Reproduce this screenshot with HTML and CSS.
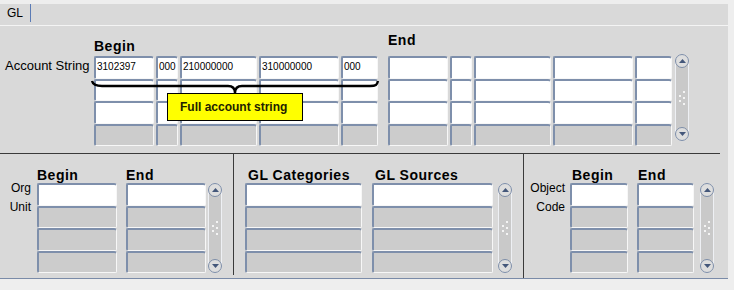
FILE: index.html
```html
<!DOCTYPE html>
<html lang="en">
  <head>
    <meta charset="UTF-8" />
    <title>GL Account Ranges</title>
    <link rel="stylesheet" href="styles.css">
  </head>
  <body>
    <div class="window">
      <div class="tabbar">
        <div class="tab">GL</div>
      </div>

      <!-- Account string ranges -->
      <div class="top">
        <div class="row-label">Account String</div>

        <div class="group">
          <div class="col-head head-begin">Begin</div>
          <div class="grid5">
            <div class="fld">3102397</div>
            <div class="fld">000</div>
            <div class="fld">210000000</div>
            <div class="fld">310000000</div>
            <div class="fld">000</div>
            <div class="fld"></div><div class="fld"></div><div class="fld"></div><div class="fld"></div><div class="fld"></div>
            <div class="fld"></div><div class="fld"></div><div class="fld"></div><div class="fld"></div><div class="fld"></div>
            <div class="fld off"></div><div class="fld off"></div><div class="fld off"></div><div class="fld off"></div><div class="fld off"></div>
          </div>
        </div>

        <div class="group group-end">
          <div class="col-head head-end">End</div>
          <div class="grid5">
            <div class="fld"></div><div class="fld"></div><div class="fld"></div><div class="fld"></div><div class="fld"></div>
            <div class="fld"></div><div class="fld"></div><div class="fld"></div><div class="fld"></div><div class="fld"></div>
            <div class="fld"></div><div class="fld"></div><div class="fld"></div><div class="fld"></div><div class="fld"></div>
            <div class="fld off"></div><div class="fld off"></div><div class="fld off"></div><div class="fld off"></div><div class="fld off"></div>
          </div>
        </div>

        <div class="sb sb-top">
          <span class="sb-btn"><svg width="7" height="4" viewBox="0 0 7 4"><path d="M0 4L3.5 0L7 4Z" fill="#44577a"/></svg></span>
          <svg class="grip" width="6" height="14" viewBox="0 0 6 14"><g fill="#f4f4f4"><rect x="4" y="0" width="2" height="2"/><rect x="0" y="4" width="2" height="2"/><rect x="4" y="6" width="2" height="2"/><rect x="0" y="9" width="2" height="2"/><rect x="4" y="12" width="2" height="2"/></g></svg>
          <span class="sb-btn"><svg width="7" height="4" viewBox="0 0 7 4"><path d="M0 0L3.5 4L7 0Z" fill="#44577a"/></svg></span>
        </div>

        <svg class="brace" width="292" height="18" viewBox="0 0 292 18">
          <path d="M2 3C3 7 6 8 12 8L138 8C143 8 145 11 145 15C145 11 147 8 152 8L280 8C286 8 287 7 288 3" fill="none" stroke="#000" stroke-width="2.4"/>
        </svg>
        <div class="callout">Full account string</div>
      </div>

      <div class="rule"></div>

      <div class="bottom">
        <!-- Org unit -->
        <div class="panel p-org">
          <div class="side-label side-org">Org<br>Unit</div>
          <div class="col col-a">
            <div class="col-head">Begin</div>
            <div class="stack">
              <div class="fld"></div><div class="fld off"></div><div class="fld off"></div><div class="fld off"></div>
            </div>
          </div>
          <div class="col col-b">
            <div class="col-head">End</div>
            <div class="stack">
              <div class="fld"></div><div class="fld off"></div><div class="fld off"></div><div class="fld off"></div>
            </div>
          </div>
          <div class="sb sb-bottom sb-org">
            <span class="sb-btn"><svg width="7" height="4" viewBox="0 0 7 4"><path d="M0 4L3.5 0L7 4Z" fill="#44577a"/></svg></span>
            <svg class="grip" width="6" height="14" viewBox="0 0 6 14"><g fill="#f4f4f4"><rect x="4" y="0" width="2" height="2"/><rect x="0" y="4" width="2" height="2"/><rect x="4" y="6" width="2" height="2"/><rect x="0" y="9" width="2" height="2"/><rect x="4" y="12" width="2" height="2"/></g></svg>
            <span class="sb-btn"><svg width="7" height="4" viewBox="0 0 7 4"><path d="M0 0L3.5 4L7 0Z" fill="#44577a"/></svg></span>
          </div>
        </div>

        <!-- Categories and sources -->
        <div class="panel p-gl">
          <div class="col col-c">
            <div class="col-head">GL Categories</div>
            <div class="stack">
              <div class="fld"></div><div class="fld off"></div><div class="fld off"></div><div class="fld off"></div>
            </div>
          </div>
          <div class="col col-d">
            <div class="col-head">GL Sources</div>
            <div class="stack">
              <div class="fld"></div><div class="fld off"></div><div class="fld off"></div><div class="fld off"></div>
            </div>
          </div>
          <div class="sb sb-bottom sb-gl">
            <span class="sb-btn"><svg width="7" height="4" viewBox="0 0 7 4"><path d="M0 4L3.5 0L7 4Z" fill="#44577a"/></svg></span>
            <svg class="grip" width="6" height="14" viewBox="0 0 6 14"><g fill="#f4f4f4"><rect x="4" y="0" width="2" height="2"/><rect x="0" y="4" width="2" height="2"/><rect x="4" y="6" width="2" height="2"/><rect x="0" y="9" width="2" height="2"/><rect x="4" y="12" width="2" height="2"/></g></svg>
            <span class="sb-btn"><svg width="7" height="4" viewBox="0 0 7 4"><path d="M0 0L3.5 4L7 0Z" fill="#44577a"/></svg></span>
          </div>
        </div>

        <!-- Object code -->
        <div class="panel p-obj">
          <div class="side-label side-obj">Object<br>Code</div>
          <div class="col col-e">
            <div class="col-head">Begin</div>
            <div class="stack">
              <div class="fld"></div><div class="fld off"></div><div class="fld off"></div><div class="fld off"></div>
            </div>
          </div>
          <div class="col col-f">
            <div class="col-head">End</div>
            <div class="stack">
              <div class="fld"></div><div class="fld off"></div><div class="fld off"></div><div class="fld off"></div>
            </div>
          </div>
          <div class="sb sb-bottom sb-obj">
            <span class="sb-btn"><svg width="7" height="4" viewBox="0 0 7 4"><path d="M0 4L3.5 0L7 4Z" fill="#44577a"/></svg></span>
            <svg class="grip" width="6" height="14" viewBox="0 0 6 14"><g fill="#f4f4f4"><rect x="4" y="0" width="2" height="2"/><rect x="0" y="4" width="2" height="2"/><rect x="4" y="6" width="2" height="2"/><rect x="0" y="9" width="2" height="2"/><rect x="4" y="12" width="2" height="2"/></g></svg>
            <span class="sb-btn"><svg width="7" height="4" viewBox="0 0 7 4"><path d="M0 0L3.5 4L7 0Z" fill="#44577a"/></svg></span>
          </div>
        </div>
      </div>
    </div>
  </body>
</html>
```

FILE: styles.css
```css
body {
  margin: 0;
  padding-top: 3px;
  background-color: #eeeeee;
  font-family: "Liberation Sans", Arial, sans-serif;
  color: #000;
}

.window {
  width: 728px;
  background-color: #d9d9d9; /* Forms grey */
  border-bottom: 1px solid #7a8ba8;
}

/* Tab strip */
.tabbar {
  height: 21px;
  border-bottom: 1px solid #f4f4f4;
}

.tab {
  width: 23px;
  height: 18px;
  margin-top: 1px;
  padding-left: 7px;
  line-height: 18px;
  font-size: 12px;
  border-right: 1px solid #5b7bb5;
}

/* Top block */
.top {
  position: relative;
  display: flex;
  align-items: flex-start;
  height: 127px;
}

.row-label {
  box-sizing: border-box;
  width: 94px;
  padding: 32px 0 0 5px;
  font-size: 13px;
  line-height: 15px;
  white-space: nowrap;
}

.group {
  display: flex;
  flex-direction: column;
}

.group-end {
  margin-left: 10px;
}

.col-head {
  box-sizing: border-box;
  height: 29px;
  padding-top: 15px;
  font-size: 14px;
  font-weight: bold;
  letter-spacing: 0.5px;
  line-height: 12px;
  white-space: nowrap;
}

.top .col-head {
  height: 30px;
}

.top .head-begin {
  padding-top: 14px;
}

.top .head-end {
  padding-top: 8px;
}

.grid5 {
  display: grid;
  grid-template-columns: 60px 22px 77px 80px 37px;
  grid-template-rows: 23px 22px 23px 22px;
  column-gap: 2px;
}

/* Text item */
.fld {
  box-sizing: border-box;
  border-style: solid;
  border-width: 2px 1px 1px 2px;
  border-color: #7e8fab #f7f7f7 #f7f7f7 #7e8fab;
  border-radius: 2px 3px 2px 2px;
  background-color: #fff;
  padding-left: 1px;
  font-size: 10px;
  line-height: 18px;
  overflow: hidden;
  white-space: nowrap;
}

.fld.off {
  background-color: #cccccc; /* Disabled row */
}

/* Scrollbar */
.sb {
  box-sizing: border-box;
  width: 14px;
  border: 1px solid #eef0f4;
  border-radius: 7px;
  background-color: #c9c9c9;
  display: flex;
  flex-direction: column;
  align-items: center;
  justify-content: space-between;
}

.sb-btn {
  box-sizing: border-box;
  width: 14px;
  height: 14px;
  margin: -1px;
  border: 1px solid #7d8da8;
  border-radius: 7px;
  background-color: #dedede;
  display: flex;
  align-items: center;
  justify-content: center;
}

.grip {
  display: block;
}

.sb-top {
  height: 87px;
  margin: 28px 0 0 3px;
}

.sb-bottom {
  height: 90px;
  margin-top: 29px;
}

/* Overlay: brace and note */
.brace {
  position: absolute;
  left: 90px;
  top: 52px;
}

.callout {
  position: absolute;
  left: 167px;
  top: 67px;
  box-sizing: border-box;
  width: 136px;
  height: 28px;
  padding-left: 12px;
  border: 1px solid #000;
  background-color: #ffff00;
  color: #222200;
  font-size: 12px;
  font-weight: bold;
  line-height: 26px;
}

.rule {
  width: 720px;
  height: 1px;
  background-color: #3a3a3a;
}

/* Bottom blocks */
.bottom {
  display: flex;
  align-items: flex-start;
  height: 124px;
}

.panel {
  display: flex;
  align-items: flex-start;
}

.p-org {
  width: 233px;
  height: 121px;
  border-right: 1px solid #3a3a3a;
}

.p-gl {
  width: 289px;
  height: 124px;
  border-right: 1px solid #3a3a3a;
}

.p-obj {
  flex: 1;
}

.side-label {
  box-sizing: border-box;
  padding-top: 25px;
  text-align: right;
  font-size: 12px;
  line-height: 19px;
}

.side-org {
  width: 31px;
}

.side-obj {
  width: 41px;
}

.col {
  display: flex;
  flex-direction: column;
}

.stack {
  display: grid;
  grid-template-rows: 23px 22px 23px 22px;
}

.col-a { width: 80px; margin-left: 6px; }
.col-b { width: 80px; margin-left: 9px; }
.sb-org { margin-left: 2px; }

.col-c { width: 117px; margin-left: 11px; }
.col-d { width: 121px; margin-left: 10px; }
.col-c .col-head,
.col-d .col-head { padding-left: 3px; }
.sb-gl { margin-left: 5px; }

.col-e { width: 58px; margin-left: 5px; }
.col-f { width: 57px; margin-left: 9px; }
.col-e .col-head { padding-left: 2px; }
.col-f .col-head { padding-left: 1px; }
.sb-obj { margin-left: 6px; }
```
